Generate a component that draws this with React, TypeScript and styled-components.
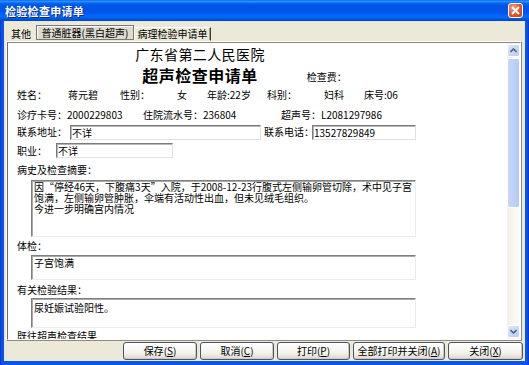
import styled, { createGlobalStyle } from "styled-components";

const GlobalStyle = createGlobalStyle`
  html, body {
    margin: 0;
    padding: 0;
    background: #fff;
  }
  body {
    font-family: "Noto Sans CJK SC", "DejaVu Sans", sans-serif;
  }
`;

const Window = styled.div`
  width: 529px;
  height: 365px;
  display: flex;
  flex-direction: column;
  background: linear-gradient(to right, #0831d9, #0a55e6 2px, #0a55e6 calc(100% - 2px), #0831d9);
  overflow: hidden;
`;

const TitleBar = styled.div`
  height: 21px;
  flex: none;
  display: flex;
  align-items: center;
  justify-content: space-between;
  padding: 0 6px 0 5px;
  background: linear-gradient(
    #0058ee 0%, #3593ff 5%, #288eff 8%, #127dff 11%, #036ffc 14%, #0262ee 18%,
    #0057e5 24%, #0054e3 30%, #0055eb 56%, #005bf5 66%, #026afe 76%,
    #0062ef 86%, #0052d6 92%, #0044bb 100%
  );
`;

const TitleText = styled.span`
  color: #fff;
  font-size: 11px;
  font-weight: bold;
  letter-spacing: 0.3px;
  text-shadow: 1px 1px #0b2a8a;
`;

const CloseButton = styled.div`
  width: 15px;
  height: 15px;
  box-sizing: border-box;
  border: 1px solid #fff;
  border-radius: 3px;
  background: radial-gradient(circle at 35% 30%, #f4a588, #e0542a 55%, #c83d14);
  display: flex;
  align-items: center;
  justify-content: center;
`;

const Body = styled.div`
  flex: 1;
  min-height: 0;
  margin: 0 4px 4px 4px;
  background: #ece9d8;
  display: flex;
  flex-direction: column;
  font-size: 10px;
  color: #000;
`;

const TabStrip = styled.div`
  height: 20px;
  flex: none;
  display: flex;
  align-items: flex-end;
  padding-left: 2px;
`;

const Tab = styled.div<{ $kind: "plain" | "active" | "normal"; $w: number }>`
  width: ${({ $w }) => $w}px;
  box-sizing: border-box;
  height: ${({ $kind }) => ($kind === "normal" ? 14 : 15)}px;
  margin-bottom: ${({ $kind }) => ($kind === "active" ? 1 : 0)}px;
  display: flex;
  align-items: center;
  justify-content: center;
  font-size: 10px;
  line-height: 12px;
  white-space: nowrap;
  background: ${({ $kind }) => ($kind === "active" ? "#dedbd0" : "#ece9d8")};
  border: ${({ $kind }) =>
    $kind === "active"
      ? "1px solid #7a786f"
      : $kind === "normal"
      ? "1px solid transparent"
      : "none"};
  border-color: ${({ $kind }) =>
    $kind === "normal" ? "#fff #3e3e3e transparent #fff" : undefined};
  box-shadow: ${({ $kind }) =>
    $kind === "active" ? "inset 1px 1px #fff" : $kind === "normal" ? "inset -1px 0 #9d9b92" : "none"};
`;

const Panel = styled.div`
  height: 300px;
  flex: none;
  box-sizing: border-box;
  margin: 0 3px 0 2px;
  border-top: 1px solid #fff;
  border-left: 1px solid #fff;
  border-right: 1px solid #8d8b82;
  border-bottom: 1px solid #8d8b82;
  display: flex;
`;

const ScrollView = styled.div`
  flex: 1;
  display: flex;
  border-top: 1px solid #8d8b82;
  border-left: 1px solid #6f6d66;
  border-right: 1px solid #fff;
  border-bottom: 1px solid #fff;
  overflow: hidden;
`;

const Sheet = styled.div`
  flex: 1;
  background: #fff;
  overflow: hidden;
  padding-top: 4px;
`;

const Scrollbar = styled.div`
  width: 13px;
  flex: none;
  display: flex;
  flex-direction: column;
  background: linear-gradient(to right, #f1efe6, #fdfdfa);
`;

const ScrollArrow = styled.div<{ $bottom?: boolean }>`
  height: 13px;
  flex: none;
  box-sizing: border-box;
  margin-top: ${({ $bottom }) => ($bottom ? "auto" : "1px")};
  margin-bottom: ${({ $bottom }) => ($bottom ? "1px" : "0")};
  border: 1px solid #fff;
  border-radius: 2px;
  background: linear-gradient(to bottom right, #dce7fd, #b6cbf8);
  display: flex;
  align-items: center;
  justify-content: center;
`;

const ScrollThumb = styled.div`
  height: 150px;
  flex: none;
  box-sizing: border-box;
  margin-top: 1px;
  border: 1px solid #fff;
  border-radius: 2px;
  background: linear-gradient(to right, #c6d7fb, #b4cbf7);
`;

const HospitalName = styled.div`
  width: 384px;
  height: 14px;
  line-height: 14px;
  text-align: center;
  font-size: 14px;
  letter-spacing: 0.4px;
`;

const TitleRow = styled.div`
  width: 384px;
  height: 18px;
  margin-top: 5px;
  display: grid;
  grid-template-columns: 1fr auto 1fr;
`;

const FormTitle = styled.div`
  grid-column: 2;
  font-size: 16px;
  font-weight: bold;
  line-height: 18px;
  letter-spacing: 0.5px;
`;

const FeeLabel = styled.div`
  grid-column: 3;
  align-self: end;
  padding-left: 49px;
  line-height: 14px;
`;

const Row = styled.div<{ $top: number; $h?: number }>`
  display: flex;
  align-items: center;
  height: ${({ $h }) => $h ?? 14}px;
  margin-top: ${({ $top }) => $top}px;
  padding-left: 9px;
  white-space: nowrap;
`;

const Cell = styled.span<{ $w?: number; $indent?: number }>`
  flex: none;
  width: ${({ $w }) => ($w ? `${$w}px` : "auto")};
  padding-left: ${({ $indent }) => $indent ?? 0}px;
  box-sizing: border-box;
  line-height: 14px;
`;

const TextBox = styled.div<{ $w: number }>`
  width: ${({ $w }) => $w}px;
  height: 15px;
  flex: none;
  box-sizing: border-box;
  padding-left: 1px;
  line-height: 13px;
  border-top: 1px solid #7b7b7b;
  border-left: 1px solid #7b7b7b;
  border-right: 1px solid #e2e2e2;
  border-bottom: 1px solid #e2e2e2;
  box-shadow: inset 1px 1px #b8b8b8;
  background: #fff;
`;

const Label = styled.div<{ $top: number }>`
  height: 14px;
  line-height: 14px;
  margin-top: ${({ $top }) => $top}px;
  padding-left: 9px;
`;

const Memo = styled.div<{ $h: number; $pad?: number; $top: number }>`
  width: 385px;
  height: ${({ $h }) => $h}px;
  margin: ${({ $top }) => $top}px 0 0 23px;
  box-sizing: border-box;
  padding: ${({ $pad }) => $pad ?? 0}px 0 0 2px;
  line-height: 11px;
  white-space: pre;
  overflow: hidden;
  border-top: 1px solid #7f7f7f;
  border-left: 1px solid #7f7f7f;
  border-right: 1px solid #ececec;
  border-bottom: 1px solid #ececec;
  box-shadow: inset 1px 1px #a9a9a9;
`;

const ButtonRow = styled.div`
  height: 20px;
  flex: none;
  display: flex;
  justify-content: flex-end;
  align-items: center;
  gap: 3px;
  padding-right: 2px;
`;

const Button = styled.button<{ $w: number }>`
  width: ${({ $w }) => $w}px;
  height: 18px;
  padding: 0;
  font-family: "Noto Sans CJK SC", "DejaVu Sans", sans-serif;
  font-size: 10px;
  line-height: 12px;
  color: #000;
  border: 1px solid #4b5568;
  border-radius: 3px;
  background: linear-gradient(#ffffff, #f4f3ee 60%, #dcd8cc);
  box-shadow: inset -1px -1px #cfcabd;
`;

const Chevron = ({ up }: { up?: boolean }) => (
  <svg width="7" height="5" viewBox="0 0 7 5">
    <polyline
      points={up ? "0.5,4 3.5,1 6.5,4" : "0.5,1 3.5,4 6.5,1"}
      fill="none"
      stroke="#4d6185"
      strokeWidth="1.6"
    />
  </svg>
);

const history =
  "因“停经46天，下腹痛3天”入院，于2008-12-23行腹式左侧输卵管切除，术中见子宫\n" +
  "饱满，左侧输卵管肿胀，伞端有活动性出血，但未见绒毛组织。\n" +
  "今进一步明确宫内情况";

const buttons: [string, string, number][] = [
  ["保存", "S", 74],
  ["取消", "C", 74],
  ["打印", "P", 73],
  ["全部打印并关闭", "A", 92],
  ["关闭", "X", 75],
];

export default function App() {
  return (
    <>
      <GlobalStyle />
      <Window>
        <TitleBar>
          <TitleText>检验检查申请单</TitleText>
          <CloseButton>
            <svg width="9" height="9" viewBox="0 0 9 9">
              <path d="M1 1 L8 8 M8 1 L1 8" stroke="#fff" strokeWidth="1.8" />
            </svg>
          </CloseButton>
        </TitleBar>
        <Body>
          <TabStrip>
            <Tab $kind="plain" $w={30}>其他</Tab>
            <Tab $kind="active" $w={98}>普通脏器(黑白超声)</Tab>
            <Tab $kind="normal" $w={77}>病理检验申请单</Tab>
          </TabStrip>
          <Panel>
            <ScrollView>
              <Sheet>
                <HospitalName>广东省第二人民医院</HospitalName>
                <TitleRow>
                  <FormTitle>超声检查申请单</FormTitle>
                  <FeeLabel>检查费：</FeeLabel>
                </TitleRow>
                <Row $top={4}>
                  <Cell $w={51}>姓名：</Cell>
                  <Cell $w={52}>蒋元碧</Cell>
                  <Cell $w={57}>性别：</Cell>
                  <Cell $w={30}>女</Cell>
                  <Cell $w={60}>年龄:22岁</Cell>
                  <Cell $w={57}>科别：</Cell>
                  <Cell $w={40}>妇科</Cell>
                  <Cell>床号:06</Cell>
                </Row>
                <Row $top={6}>
                  <Cell $w={126}>诊疗卡号：2000229803</Cell>
                  <Cell $w={138}>住院流水号：236804</Cell>
                  <Cell>超声号：L2081297986</Cell>
                </Row>
                <Row $top={2} $h={16}>
                  <Cell $w={53}>联系地址：</Cell>
                  <TextBox $w={191}>不详</TextBox>
                  <Cell $w={51} $indent={3}>联系电话：</Cell>
                  <TextBox $w={104}>13527829849</TextBox>
                </Row>
                <Row $top={3} $h={15}>
                  <Cell $w={39}>职业：</Cell>
                  <TextBox $w={117}>不详</TextBox>
                </Row>
                <Label $top={5}>病史及检查摘要：</Label>
                <Memo $top={3} $h={57} $pad={0}>{history}</Memo>
                <Label $top={2}>体检：</Label>
                <Memo $top={2} $h={25} $pad={1}>子宫饱满</Memo>
                <Label $top={3}>有关检验结果：</Label>
                <Memo $top={1} $h={30} $pad={3}>尿妊娠试验阳性。</Memo>
                <Label $top={1}>既往超声检查结果</Label>
              </Sheet>
              <Scrollbar>
                <ScrollArrow>
                  <Chevron up />
                </ScrollArrow>
                <ScrollThumb />
                <ScrollArrow $bottom>
                  <Chevron />
                </ScrollArrow>
              </Scrollbar>
            </ScrollView>
          </Panel>
          <ButtonRow>
            {buttons.map(([text, key, w]) => (
              <Button key={key} $w={w}>
                {text}(<u>{key}</u>)
              </Button>
            ))}
          </ButtonRow>
        </Body>
      </Window>
    </>
  );
}
